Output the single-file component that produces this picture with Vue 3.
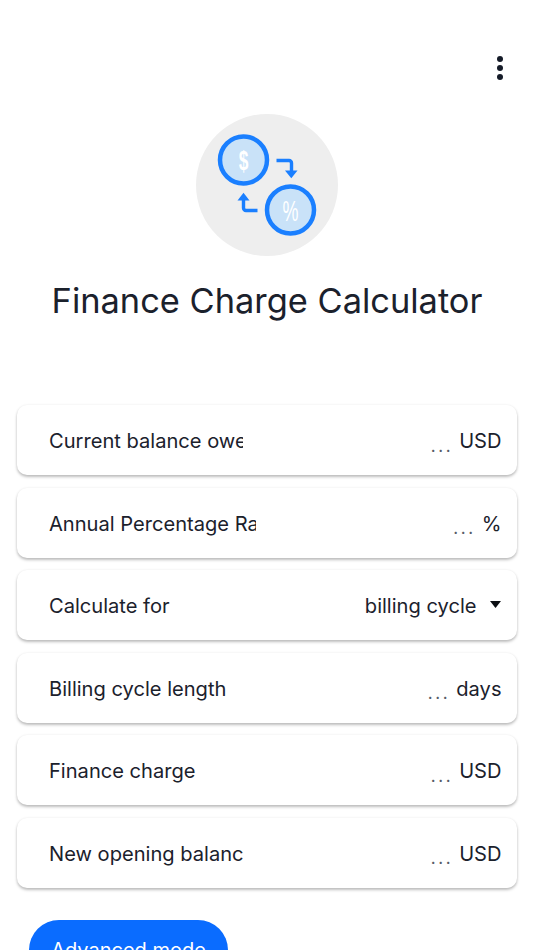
<script setup>
const rows = [
  { label: 'Current balance owed', clip: 194, value: 'USD', placeholder: true },
  { label: 'Annual Percentage Rate', clip: 207, value: '%', placeholder: true },
  { label: 'Calculate for', value: 'billing cycle', select: true },
  { label: 'Billing cycle length', value: 'days', placeholder: true },
  { label: 'Finance charge', value: 'USD', placeholder: true },
  { label: 'New opening balance', clip: 194, value: 'USD', placeholder: true }
]
</script>

<template>
  <div class="page">
    <header class="toolbar">
      <button class="menu" aria-label="More options">
        <span></span><span></span><span></span>
      </button>
    </header>

    <div class="hero">
      <svg class="logo" width="142" height="142" viewBox="196 114 142 142">
        <circle cx="267" cy="185" r="71" fill="#eeeeee" />
        <circle cx="243.5" cy="160" r="23.5" fill="#c9e2f8" stroke="#1a7fff" stroke-width="4.5" />
        <circle cx="290.5" cy="210" r="23.5" fill="#c9e2f8" stroke="#1a7fff" stroke-width="4.5" />
        <text class="glyph bold" transform="translate(243.5 169.5) scale(0.62 1)" text-anchor="middle">$</text>
        <text class="glyph" transform="translate(290.5 220.5) scale(0.62 1)" text-anchor="middle">%</text>
        <path d="M276.5 160.5h12.5a2.5 2.5 0 0 1 2.5 2.5v8" fill="none" stroke="#1a7fff" stroke-width="3.4" />
        <path d="M285 170.5h12.5l-6.2 7.8z" fill="#1a7fff" />
        <path d="M257.5 210.5h-11.5a2.5 2.5 0 0 1-2.5-2.5v-8" fill="none" stroke="#1a7fff" stroke-width="3.4" />
        <path d="M237.5 200.5h12l-6-7.8z" fill="#1a7fff" />
      </svg>
      <h1 class="title">Finance Charge Calculator</h1>
    </div>

    <section class="rows">
      <div v-for="row in rows" :key="row.label" class="card">
        <span class="label" :style="row.clip ? { width: row.clip + 'px' } : null">{{ row.label }}</span>
        <span class="value">
          <span v-if="row.placeholder" class="dots">...</span>
          <span>{{ row.value }}</span>
          <svg v-if="row.select" class="caret" width="11" height="7" viewBox="0 0 11 7">
            <path d="M0 0h11L5.5 7z" fill="#0c0f14" />
          </svg>
        </span>
      </div>
    </section>

    <button class="advanced">Advanced mode</button>
  </div>
</template>

<style scoped>
.page {
  width: 534px;
  height: 950px;
  overflow: hidden;
  background: #fff;
  font-family: Inter, "Noto Sans", sans-serif;
  color: #1b212c;
}

.toolbar {
  display: flex;
  justify-content: flex-end;
  height: 114px;
  padding: 56px 31px 0 0;
  box-sizing: border-box;
}

.menu {
  display: flex;
  flex-direction: column;
  gap: 3px;
  width: 6px;
  height: 24px;
  padding: 0;
  border: 0;
  background: none;
}

.menu span {
  width: 6px;
  height: 6px;
  border-radius: 50%;
  background: #151b28;
}

.hero {
  display: flex;
  flex-direction: column;
  align-items: center;
}

.logo {
  display: block;
}

.title {
  margin: 23px 0 0;
  font-size: 34.4px;
  line-height: 44px;
  font-weight: 400;
  white-space: nowrap;
}

.glyph {
  font-family: "Liberation Sans", sans-serif;
  font-size: 29px;
  fill: #fff;
}

.glyph.bold {
  font-size: 28px;
  font-weight: 700;
}

.rows {
  display: flex;
  flex-direction: column;
  gap: 12.5px;
  margin: 82px 17px 0;
}

.card {
  display: flex;
  align-items: center;
  justify-content: space-between;
  height: 70px;
  padding: 2px 15.5px 0 32px;
  box-sizing: border-box;
  border-radius: 10px;
  background: #fff;
  box-shadow: 0 2px 3px rgba(0, 0, 0, 0.25), 0 0 3px rgba(0, 0, 0, 0.06);
}

.label {
  overflow: hidden;
  white-space: nowrap;
  font-size: 20.1px;
}

.value {
  display: flex;
  align-items: center;
  gap: 6px;
  font-size: 20.1px;
}

.dots {
  color: #555b66;
  font-size: 17px;
  letter-spacing: 2.6px;
  padding-top: 9px;
}

.caret {
  margin: 0 1px 3px 7px;
}

.advanced {
  display: block;
  width: 199px;
  height: 60px;
  margin: 32px 0 0 29px;
  padding: 0;
  border: 0;
  border-radius: 30px;
  background: #0a6cff;
  color: #fff;
  font-family: inherit;
  font-size: 20px;
}
</style>
